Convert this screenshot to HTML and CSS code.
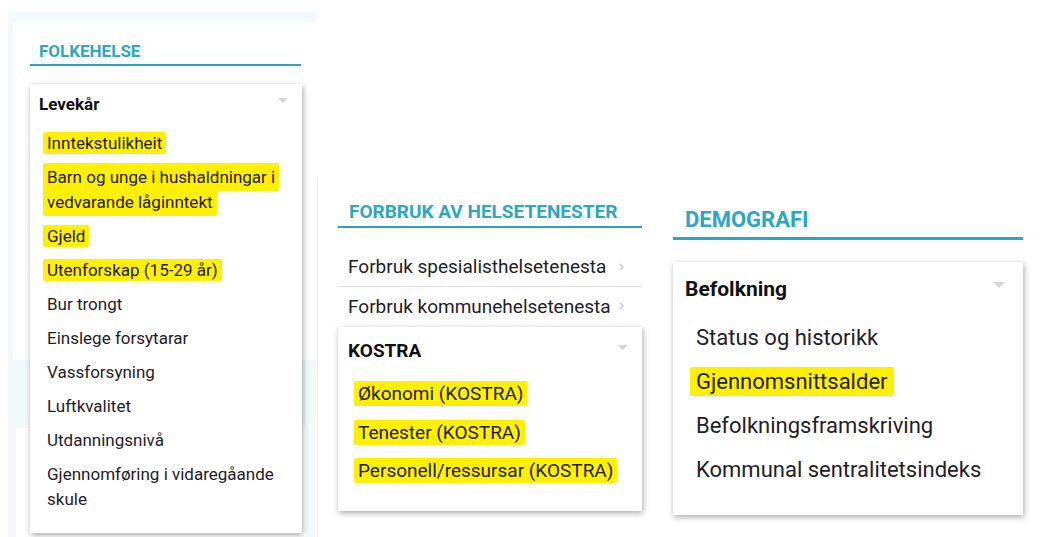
FILE: index.html
```html
<!DOCTYPE html>
<html>

<head>
  <title>Statistikk – tema</title>
  <link rel="stylesheet" href="styles.css">
</head>

<body>
  <div class="collage">

    <!-- Folkehelse -->
    <div class="shot shot-left">
      <h2 class="section-title">FOLKEHELSE</h2>
      <div class="menu-card">
        <div class="menu-head">
          <span>Levekår</span>
          <svg class="caret" viewBox="0 0 10 5"><path d="M0 0h10L5 5z" /></svg>
        </div>
        <ul class="menu-list">
          <li><span class="hl">Inntekstulikheit</span></li>
          <li><span class="hl hl-wrap">Barn og unge i hushaldningar i vedvarande låginntekt</span></li>
          <li><span class="hl">Gjeld</span></li>
          <li><span class="hl">Utenforskap (15-29 år)</span></li>
          <li>Bur trongt</li>
          <li>Einslege forsytarar</li>
          <li>Vassforsyning</li>
          <li>Luftkvalitet</li>
          <li>Utdanningsnivå</li>
          <li>Gjennomføring i vidaregåande skule</li>
        </ul>
      </div>
    </div>

    <!-- Forbruk av helsetenester -->
    <div class="shot shot-mid">
      <h2 class="section-title">FORBRUK AV HELSETENESTER</h2>
      <div class="link-rows">
        <div class="link-row">
          <span>Forbruk spesialisthelsetenesta</span>
          <svg class="chevron" viewBox="0 0 5 8"><path d="M1 1l3 3-3 3" /></svg>
        </div>
        <div class="link-row">
          <span>Forbruk kommunehelsetenesta</span>
          <svg class="chevron" viewBox="0 0 5 8"><path d="M1 1l3 3-3 3" /></svg>
        </div>
      </div>
      <div class="menu-card">
        <div class="menu-head">
          <span>KOSTRA</span>
          <svg class="caret" viewBox="0 0 10 5"><path d="M0 0h10L5 5z" /></svg>
        </div>
        <ul class="menu-list">
          <li><span class="hl">Økonomi (KOSTRA)</span></li>
          <li><span class="hl">Tenester (KOSTRA)</span></li>
          <li><span class="hl">Personell/ressursar (KOSTRA)</span></li>
        </ul>
      </div>
    </div>

    <!-- Demografi -->
    <div class="shot shot-right">
      <h2 class="section-title">DEMOGRAFI</h2>
      <div class="menu-card">
        <div class="menu-head">
          <span>Befolkning</span>
          <svg class="caret" viewBox="0 0 10 5"><path d="M0 0h10L5 5z" /></svg>
        </div>
        <ul class="menu-list">
          <li>Status og historikk</li>
          <li><span class="hl">Gjennomsnittsalder</span></li>
          <li>Befolkningsframskriving</li>
          <li>Kommunal sentralitetsindeks</li>
        </ul>
      </div>
    </div>

  </div>
</body>

</html>
```

FILE: styles.css
```css
* {
  box-sizing: border-box;
}

body {
  margin: 0;
  background-color: #fff;
  font-family: Roboto, "Noto Sans", Arial, sans-serif;
  color: #1f2128;
  overflow: hidden;
}

.collage {
  display: flex;
  align-items: flex-start;
  height: 537px;
}

/* shared bits */
.section-title {
  margin: 0;
  color: #2aa8c4;
  font-weight: 700;
  border-bottom: 2px solid #2aa6c2;
}

.menu-card {
  background-color: #fff;
  box-shadow: 1px 2px 6px rgba(0, 0, 0, 0.35);
}

.menu-head {
  display: flex;
  justify-content: space-between;
  align-items: center;
  font-weight: 700;
  color: #111;
}

.menu-list {
  list-style: none;
  margin: 0;
}

.caret {
  fill: #d4d4d4;
}

.chevron {
  width: 5px;
  height: 8px;
  fill: none;
  stroke: #c8c8c8;
  stroke-width: 1.4;
}

/* yellow marker */
.hl {
  background-color: #fff000;
  border-radius: 2px;
  padding: 1px 4px;
  margin-left: -4px;
}

.hl-wrap {
  padding: 4px 4px;
  -webkit-box-decoration-break: clone;
  box-decoration-break: clone;
}

/* left screenshot */
.shot-left {
  margin: 12px 0 0 8px;
  width: 308px;
  height: 525px;
  padding: 29px 15px 0 22px;
  background:
    linear-gradient(#fff, #fff) 5px 10px / 303px 338px no-repeat,
    linear-gradient(#fff, #fff) 8px 416px / 290px 109px no-repeat,
    #f2f9fb;
}

.shot-left .section-title {
  font-size: 17px;
  line-height: 20px;
  padding: 0 0 3px 9px;
}

.shot-left .menu-card {
  margin: 18px -1px 0 0;
}

.shot-left .menu-head {
  font-size: 17px;
  line-height: 24px;
  padding: 8px 14px 11px 9px;
}

.shot-left .caret {
  width: 10px;
  height: 5px;
  margin-top: -8px;
}

.shot-left .menu-list {
  padding: 0 12px 16px 17px;
  font-size: 17px;
  line-height: 25px;
}

.shot-left .menu-list li {
  padding: 4px 0 5px;
}

/* middle screenshot */
.shot-mid {
  margin: 177px 0 0 1px;
  width: 340px;
  height: 360px;
  padding: 24px 15px 0 20px;
  border-left: 1px solid #e6f2f6;
}

.shot-mid .section-title {
  font-size: 19px;
  line-height: 22px;
  padding: 0 0 3px 11px;
}

.link-rows {
  margin-top: 20px;
}

.link-row {
  display: flex;
  justify-content: space-between;
  align-items: center;
  height: 39px;
  padding: 0 18px 1px 10px;
  font-size: 19px;
  border-bottom: 1px solid #e4e4e4;
}

.link-row:last-child {
  border-bottom: none;
}

.shot-mid .menu-card {
  margin-top: 1px;
}

.shot-mid .menu-head {
  font-size: 19px;
  line-height: 28px;
  padding: 10px 14px 10px 10px;
}

.shot-mid .caret {
  width: 11px;
  height: 5px;
  margin-top: -8px;
}

.shot-mid .menu-list {
  padding: 0 14px 20px 20px;
  font-size: 19px;
  line-height: 38.5px;
}

/* right screenshot */
.shot-right {
  margin: 190px 0 0 4px;
  width: 362px;
  padding: 17px 0 0 12px;
}

.shot-right .section-title {
  font-size: 22px;
  line-height: 26px;
  padding: 0 0 4px 12px;
  border-bottom-width: 3px;
}

.shot-right .menu-card {
  margin-top: 22px;
}

.shot-right .menu-head {
  font-size: 21px;
  line-height: 30px;
  padding: 12px 18px 12px 12px;
}

.shot-right .caret {
  width: 12px;
  height: 6px;
  margin-top: -8px;
}

.shot-right .menu-list {
  padding: 0 18px 23px 23px;
  font-size: 22px;
  line-height: 44px;
}

.shot-right .hl {
  padding: 2px 6px;
  margin-left: -6px;
}
```
